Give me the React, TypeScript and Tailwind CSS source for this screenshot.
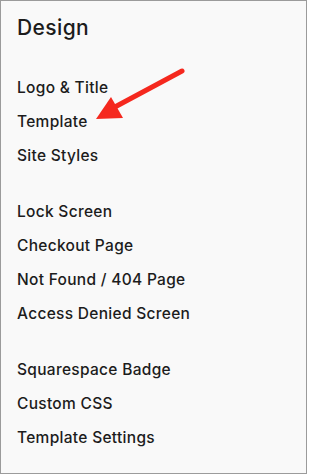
import React from "react";

const groups = [
  ["Logo & Title", "Template", "Site Styles"],
  ["Lock Screen", "Checkout Page", "Not Found / 404 Page", "Access Denied Screen"],
  ["Squarespace Badge", "Custom CSS", "Template Settings"],
];

export default function App() {
  return (
    <div
      className="relative w-[307px] h-[474px] border border-[#9b9b9b] bg-[#f9f9f9] text-[#1c1c1c] overflow-hidden"
      style={{ fontFamily: "Inter, 'Noto Sans', sans-serif" }}
    >
      <div className="pl-4 pt-[13px]">
        <h1 className="text-[21px] leading-[28px] font-medium tracking-[0.4px]">Design</h1>
        <div className="mt-[29px] flex flex-col gap-[22px]">
          {groups.map((g, i) => (
            <ul key={i} className="flex flex-col">
              {g.map((t) => (
                <li key={t} className="h-[34px] leading-[34px] text-[15.5px] font-medium tracking-[0.3px]">
                  {t}
                </li>
              ))}
            </ul>
          ))}
        </div>
      </div>
      <svg
        className="absolute left-0 top-0 pointer-events-none"
        width="307"
        height="474"
        viewBox="0 0 307 474"
      >
        <line x1="181" y1="70" x2="112" y2="107" stroke="#f5281e" strokeWidth="5" strokeLinecap="round" />
        <polygon points="95,118 110,96 122,117" fill="#f5281e" />
      </svg>
    </div>
  );
}
